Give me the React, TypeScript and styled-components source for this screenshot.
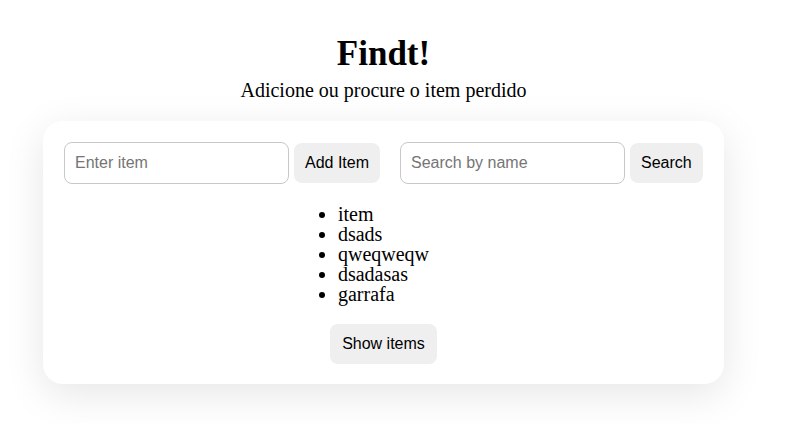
import React, { useState } from 'react';
import styled, { createGlobalStyle } from 'styled-components';

const GlobalStyle = createGlobalStyle`
  body {
    margin: 0;
    background: #ffffff;
    font-family: "Liberation Serif", "Times New Roman", serif;
    color: #000000;
  }
`;

const Page = styled.main`
  display: flex;
  flex-direction: column;
  align-items: center;
  width: 767px;
  min-height: 425px;
  box-sizing: border-box;
  padding: 34px 0 60px;
`;

const Title = styled.h1`
  margin: 0;
  font-size: 35px;
  line-height: 40px;
  font-weight: bold;
`;

const Subtitle = styled.p`
  margin: 5px 0 19px;
  font-size: 20px;
  line-height: 23px;
`;

const Card = styled.section`
  width: 681px;
  box-sizing: border-box;
  padding: 21px 21px 20px;
  background: #ffffff;
  border-radius: 20px;
  box-shadow: 0 10px 40px rgba(0, 0, 0, 0.1);
  display: flex;
  flex-direction: column;
  align-items: center;
  gap: 20px;
`;

const Toolbar = styled.div`
  display: flex;
  align-items: center;
  width: 100%;
`;

const Field = styled.input`
  width: 225px;
  height: 42px;
  box-sizing: border-box;
  padding: 0 10px;
  border: 1px solid #c8c8c8;
  border-radius: 8px;
  font-family: "Liberation Sans", Arial, sans-serif;
  font-size: 16px;
  outline: none;

  &::placeholder {
    color: #757575;
  }
`;

const Button = styled.button<{ $gapAfter?: number }>`
  height: 40px;
  margin-left: 5px;
  margin-right: ${({ $gapAfter }) => $gapAfter ?? 0}px;
  padding: 0 11px;
  border: none;
  border-radius: 8px;
  background: #efefef;
  color: #000000;
  font-family: "Liberation Sans", Arial, sans-serif;
  font-size: 16px;
  cursor: pointer;
`;

const ShowButton = styled(Button)`
  margin: 0;
  padding: 0 12px;
`;

const ItemList = styled.ul`
  margin: 0;
  padding: 0 40px;
  width: fit-content;
  font-size: 20px;
  line-height: 20px;
`;

const initialItems = ['item', 'dsads', 'qweqweqw', 'dsadasas', 'garrafa'];

export default function App() {
  const [items] = useState(initialItems);

  return (
    <>
      <GlobalStyle />
      <Page>
        <Title>Findt!</Title>
        <Subtitle>Adicione ou procure o item perdido</Subtitle>
        <Card>
          <Toolbar>
            <Field placeholder="Enter item" />
            <Button $gapAfter={20}>Add Item</Button>
            <Field placeholder="Search by name" />
            <Button>Search</Button>
          </Toolbar>
          <ItemList>
            {items.map((item) => (
              <li key={item}>{item}</li>
            ))}
          </ItemList>
          <ShowButton>Show items</ShowButton>
        </Card>
      </Page>
    </>
  );
}
